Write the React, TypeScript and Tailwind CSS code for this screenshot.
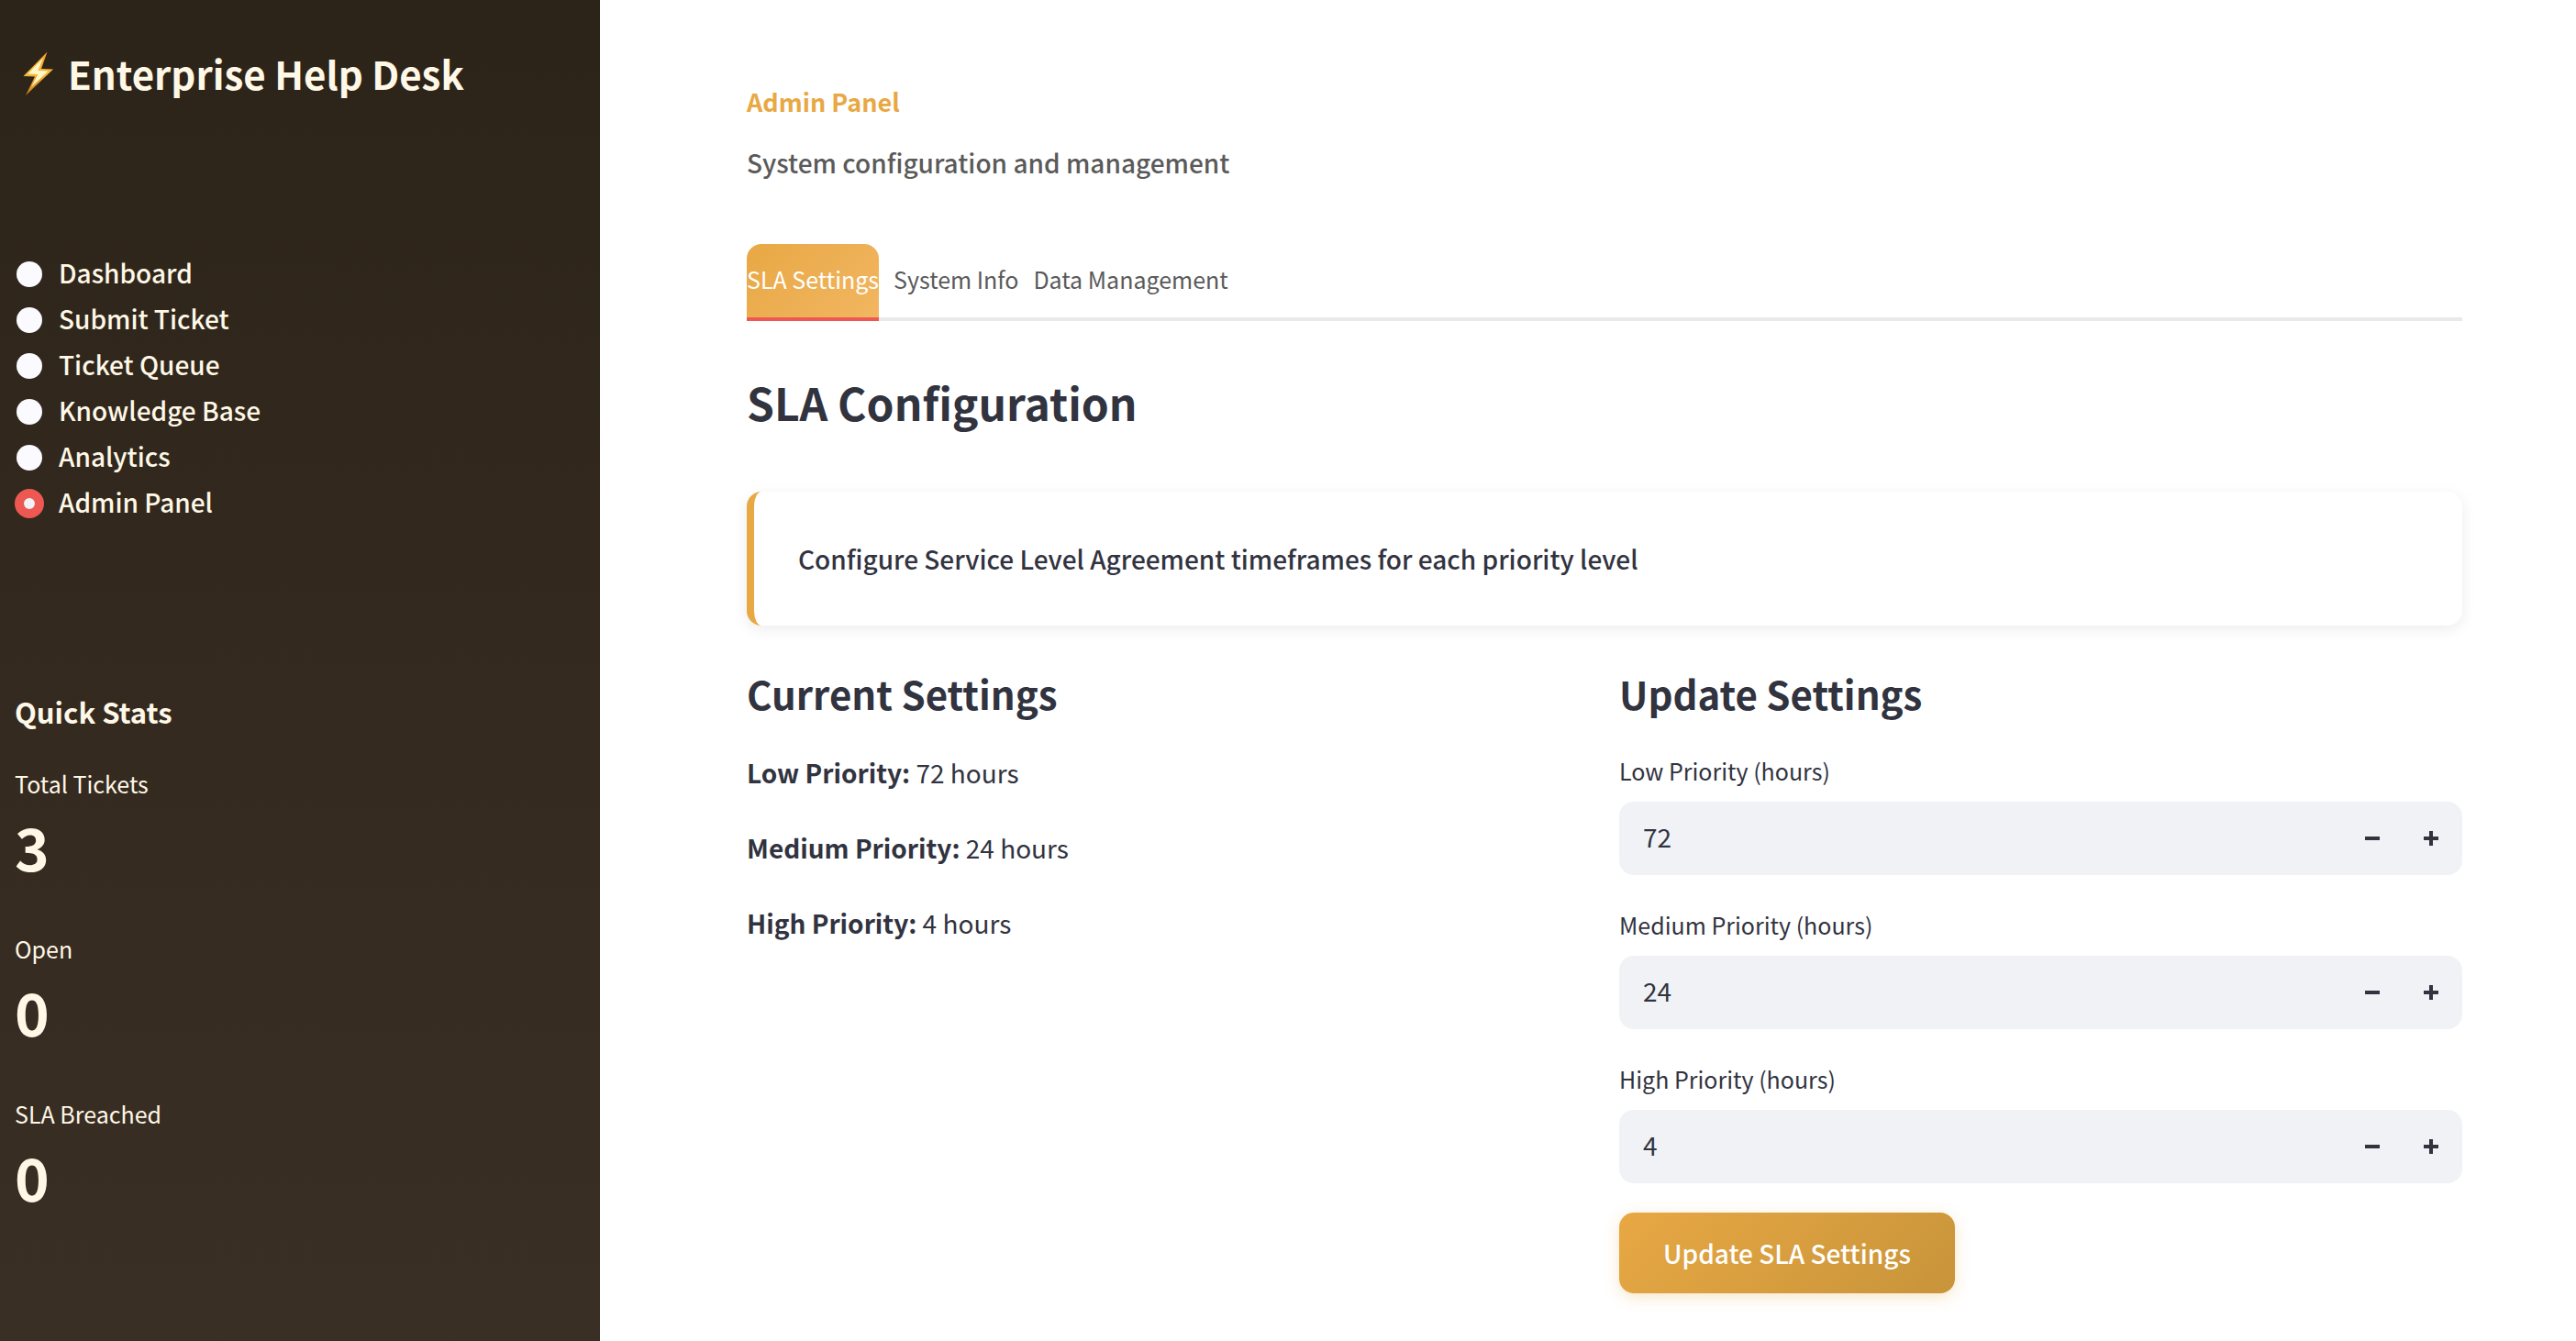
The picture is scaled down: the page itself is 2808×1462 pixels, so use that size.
import { useState } from "react";

const pages = ["Dashboard", "Submit Ticket", "Ticket Queue", "Knowledge Base", "Analytics", "Admin Panel"];

const stats = [
  { label: "Total Tickets", value: 3 },
  { label: "Open", value: 0 },
  { label: "SLA Breached", value: 0 },
];

const tabs = ["SLA Settings", "System Info", "Data Management"];

type Level = "Low" | "Medium" | "High";
const levels: Level[] = ["Low", "Medium", "High"];
const current: Record<Level, number> = { Low: 72, Medium: 24, High: 4 };

function Bolt() {
  return (
    <svg viewBox="0 0 36 50" className="h-[50px] w-9 shrink-0" aria-hidden="true">
      <defs>
        <linearGradient id="bolt" x1="0" y1="0" x2="0" y2="1">
          <stop offset="0" stopColor="#f0a020" />
          <stop offset="0.5" stopColor="#f9b93a" />
          <stop offset="1" stopColor="#c9791c" />
        </linearGradient>
      </defs>
      <path d="M27.5 1.5 1.5 28 14 28.5 4 49 34 20.500 21 20Z" fill="url(#bolt)" />
      <path d="M23 8 6.500 25.500 17.500 26 10 40 28.500 22.500 17.500 22Z" fill="#fff6c8" />
    </svg>
  );
}

function Sidebar() {
  const [page, setPage] = useState("Admin Panel");
  return (
    <aside className="w-[654px] shrink-0 bg-linear-to-b from-[#2d2419] to-[#3a2f25] px-4 pt-[51px] text-[#fff8e7]">
      <h1 className="flex items-center gap-[14px] pl-2 text-[42px] leading-[58px] font-bold">
        <Bolt />
        Enterprise Help Desk
      </h1>
      <div role="radiogroup" aria-label="Navigation" className="mt-[165px]">
        {pages.map((name) => (
          <label key={name} className="flex h-[50px] cursor-pointer items-center gap-4 text-[28px] leading-[46px] font-medium">
            <input
              type="radio"
              name="page"
              checked={page === name}
              onChange={() => setPage(name)}
              className="m-[2px] size-7 appearance-none rounded-full bg-[#fafaff] checked:m-0 checked:size-8 checked:border-[10px] checked:border-[#ee5853] checked:bg-[#f0f2f6]"
            />
            <span className="pb-1">{name}</span>
          </label>
        ))}
      </div>
      <h2 className="mt-[180px] text-[31px] leading-[44px] font-bold">Quick Stats</h2>
      <dl className="mt-9 flex flex-col gap-11">
        {stats.map((s) => (
          <div key={s.label}>
            <dt className="text-[25px] leading-[40px]">{s.label}</dt>
            <dd className="text-[64px] leading-[96px] font-bold">{s.value}</dd>
          </div>
        ))}
      </dl>
    </aside>
  );
}

function Minus() {
  return (
    <svg viewBox="0 0 16 16" className="size-4" fill="currentColor" aria-hidden="true">
      <path d="M0 6h16v4H0z" />
    </svg>
  );
}

function Plus() {
  return (
    <svg viewBox="0 0 16 16" className="size-4" fill="currentColor" aria-hidden="true">
      <path d="M6 0h4v6h6v4h-6v6H6v-6H0V6h6z" />
    </svg>
  );
}

function HoursField({ level }: { level: Level }) {
  const [value, setValue] = useState(current[level]);
  const id = `${level.toLowerCase()}-hours`;
  return (
    <div>
      <label htmlFor={id} className="block text-[25px] leading-[40px]">
        {level} Priority (hours)
      </label>
      <div className="mt-[14px] flex h-20 overflow-hidden rounded-2xl bg-[#f0f2f6] pr-[2px]">
        <input
          id={id}
          type="text"
          inputMode="numeric"
          value={value}
          onChange={(e) => setValue(Number(e.target.value) || 0)}
          className="min-w-0 flex-1 bg-transparent px-[26px] pb-1 text-[28px] leading-[48px] outline-none"
        />
        <button type="button" aria-label={`Decrease ${level} Priority`} onClick={() => setValue(value - 1)} className="flex w-16 items-center justify-center">
          <Minus />
        </button>
        <button type="button" aria-label={`Increase ${level} Priority`} onClick={() => setValue(value + 1)} className="flex w-16 items-center justify-center">
          <Plus />
        </button>
      </div>
    </div>
  );
}

export default function App() {
  const [tab, setTab] = useState(tabs[0]);
  return (
    <div className="flex min-h-screen bg-white font-['Noto_Sans_CJK_SC','Noto_Sans',sans-serif] text-[#31333f]">
      <Sidebar />
      <main className="min-w-0 flex-1 pt-[87px] pr-[124px] pb-[52px] pl-40">
        <p className="text-[27px] leading-[48px] font-bold text-[#e8a844]">Admin Panel</p>
        <p className="mt-[18px] text-[28px] leading-[48px] font-medium text-[#5a5a5a]">System configuration and management</p>

        <div role="tablist" className="mt-[65px] flex gap-4 border-b-4 border-[#e9e9ea]">
          {tabs.map((name) => (
            <button
              key={name}
              type="button"
              role="tab"
              aria-selected={tab === name}
              onClick={() => setTab(name)}
              className="-mb-1 h-[84px] rounded-t-2xl border-b-4 border-transparent pb-1 text-[25px] leading-[40px] text-[#5a5a5a] aria-selected:border-[#ee5853] aria-selected:bg-linear-135 aria-selected:from-[#e8a844] aria-selected:to-[#f2b661] aria-selected:text-white"
            >
              {name}
            </button>
          ))}
        </div>

        <h2 className="mt-[58px] text-[48px] leading-[60px] font-bold">SLA Configuration</h2>

        <div className="mt-[68px] rounded-2xl border-l-8 border-[#e8a844] bg-white p-12 text-[28px] leading-[50px] font-medium shadow-[0_4px_16px_rgba(0,0,0,0.08)]">
          Configure Service Level Agreement timeframes for each priority level
        </div>

        <div className="mt-11 grid grid-cols-2 gap-8">
          <section>
            <h3 className="text-[42px] leading-[60px] font-bold">Current Settings</h3>
            <div className="mt-[30px] flex flex-col gap-[30px] text-[28px] leading-[52px]">
              {levels.map((level) => (
                <p key={level}>
                  <strong>{level} Priority:</strong> {current[level]} hours
                </p>
              ))}
            </div>
          </section>
          <section>
            <h3 className="text-[42px] leading-[60px] font-bold">Update Settings</h3>
            <form className="mt-[34px]" onSubmit={(e) => e.preventDefault()}>
              <div className="flex flex-col gap-[34px]">
                {levels.map((level) => (
                  <HoursField key={level} level={level} />
                ))}
              </div>
              <button
                type="submit"
                className="mt-8 h-[88px] rounded-2xl bg-linear-135 from-[#e8a844] to-[#c8943a] px-12 text-[28px] leading-[48px] font-medium text-white shadow-[0_4px_16px_rgba(232,168,68,0.3)]"
              >
                Update SLA Settings
              </button>
            </form>
          </section>
        </div>
      </main>
    </div>
  );
}
